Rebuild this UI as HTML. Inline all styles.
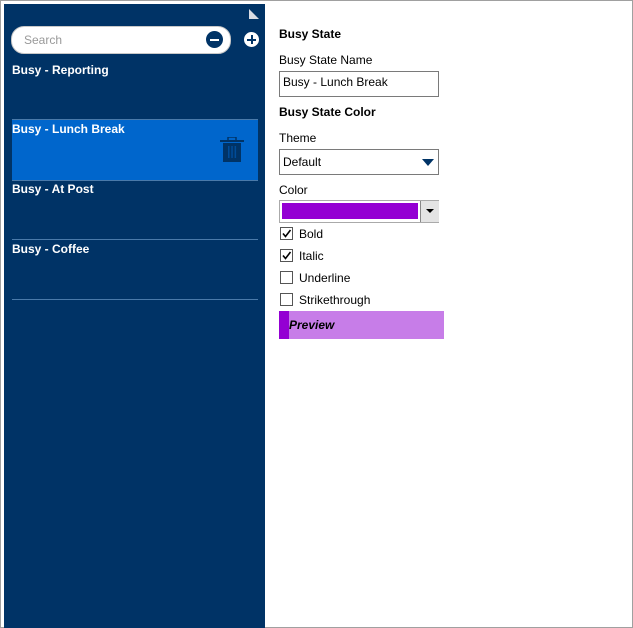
<html><head><style>
body{margin:0;width:633px;height:628px;position:relative;background:#fff;font-family:"Liberation Sans",sans-serif;font-size:12px;overflow:hidden}
.frame{position:absolute;left:0;top:0;width:631px;height:626px;border:1px solid #a0a0a0}
.side{position:absolute;left:4px;top:4px;width:261px;height:624px;background:#003366}
.a{position:absolute}
.item{position:absolute;left:8px;width:246px;height:59px;color:#fff;font-weight:bold;font-size:12px;border-bottom:1px solid #4a7aaa}
.item span{position:absolute;left:0;top:2px}
.lbl{position:absolute;left:279px;color:#000}
.box{position:absolute;border:1px solid #7a7a7a;background:#fff}
.cb{position:absolute;left:280px;width:11px;height:11px;border:1px solid #555;background:#fff}
.cbl{position:absolute;left:299px}
</style></head><body>
<div class="frame"></div>
<div class="side">
  <div class="a" style="left:245px;top:5px;width:0;height:0;border-right:10px solid transparent;border-bottom:10px solid #d8dce4"></div>
  <div class="a" style="left:7px;top:22px;width:218px;height:26px;background:#fff;border-radius:13px;border:1px solid #c8c8c8"></div>
  <div class="a" style="left:20px;top:29px;color:#999;font-size:12px">Search</div>
  <div class="a" style="left:202px;top:27px;width:17px;height:17px;border-radius:50%;background:#003366"><div class="a" style="left:4px;top:8px;width:9px;height:1.5px;background:#fff"></div></div>
  <div class="a" style="left:239px;top:27px;width:15px;height:15px;border-radius:50%;background:#fff;border:1px solid #003366"><div class="a" style="left:3px;top:7px;width:9px;height:1.5px;background:#003366"></div><div class="a" style="left:7px;top:3px;width:1.5px;height:9px;background:#003366"></div></div>
  <div class="item" style="top:57px;border-bottom:none"><span>Busy - Reporting</span></div>
  <div class="item" style="top:115px;height:60px;background:#0066cc;border-top:1px solid #4a7aaa"><span>Busy - Lunch Break</span>
    <svg class="a" style="left:208px;top:17px" width="24" height="26" viewBox="0 0 24 26"><rect x="0" y="3" width="24" height="2" fill="#003366"/><rect x="8" y="0" width="8" height="4" fill="none" stroke="#003366" stroke-width="1.5"/><path d="M3 6h18v19H3z" fill="#003366"/><rect x="8" y="9" width="1.5" height="12" fill="#0066cc" opacity=".5"/><rect x="11.3" y="9" width="1.5" height="12" fill="#0066cc" opacity=".5"/><rect x="14.6" y="9" width="1.5" height="12" fill="#0066cc" opacity=".5"/></svg>
  </div>
  <div class="item" style="top:176px"><span>Busy - At Post</span></div>
  <div class="item" style="top:236px"><span>Busy - Coffee</span></div>
</div>
<div class="lbl" style="top:27px;font-weight:bold">Busy State</div>
<div class="lbl" style="top:53px">Busy State Name</div>
<div class="box" style="left:279px;top:71px;width:158px;height:24px"><span class="a" style="left:3px;top:3px">Busy - Lunch Break</span></div>
<div class="lbl" style="top:105px;font-weight:bold">Busy State Color</div>
<div class="lbl" style="top:131px">Theme</div>
<div class="box" style="left:279px;top:149px;width:158px;height:24px"><span class="a" style="left:3px;top:5px">Default</span><div class="a" style="left:142px;top:9px;border-left:6px solid transparent;border-right:6px solid transparent;border-top:7px solid #003366"></div></div>
<div class="lbl" style="top:183px">Color</div>
<div class="box" style="left:279px;top:200px;width:158px;height:21px;border-color:#aaa"><div class="a" style="left:2px;top:2px;width:136px;height:16px;background:#9400d3"></div><div class="a" style="left:140px;top:0;width:18px;height:21px;background:#e4e4e4;border-left:1px solid #888"><div class="a" style="left:5px;top:8px;border-left:4px solid transparent;border-right:4px solid transparent;border-top:4px solid #000"></div></div></div>
<div class="cb" style="top:227px"><svg class="a" width="11" height="11"><path d="M2 5.5l2.5 3L9.5 2" stroke="#000" stroke-width="1.6" fill="none"/></svg></div><div class="cbl" style="top:227px">Bold</div>
<div class="cb" style="top:249px"><svg class="a" width="11" height="11"><path d="M2 5.5l2.5 3L9.5 2" stroke="#000" stroke-width="1.6" fill="none"/></svg></div><div class="cbl" style="top:249px">Italic</div>
<div class="cb" style="top:271px"></div><div class="cbl" style="top:271px">Underline</div>
<div class="cb" style="top:293px"></div><div class="cbl" style="top:293px">Strikethrough</div>
<div class="a" style="left:279px;top:311px;width:165px;height:28px;background:#c77de8"><div class="a" style="left:0;top:0;width:10px;height:28px;background:#9400d3"></div><span class="a" style="left:10px;top:7px;font-weight:bold;font-style:italic">Preview</span></div>
</body></html>
